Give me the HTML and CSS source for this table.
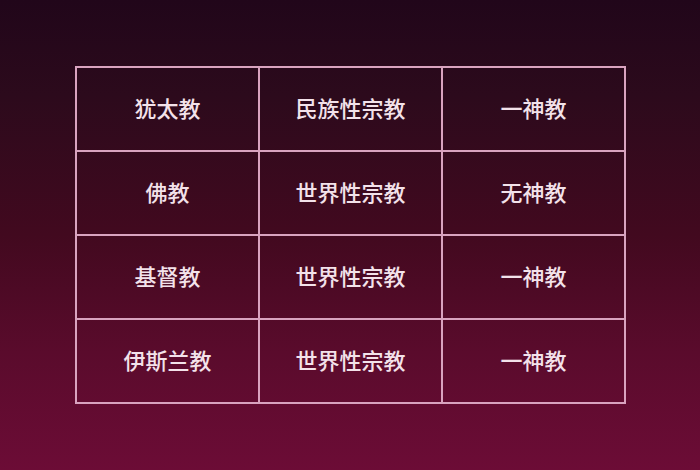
FILE: index.html
```html
<!DOCTYPE html>
<html lang="zh">
<head>
<meta charset="utf-8">
<link rel="stylesheet" href="styles.css">
</head>
<body>
<div class="page">
  <table class="grid">
    <tr><td>犹太教</td><td>民族性宗教</td><td>一神教</td></tr>
    <tr><td>佛教</td><td>世界性宗教</td><td>无神教</td></tr>
    <tr><td>基督教</td><td>世界性宗教</td><td>一神教</td></tr>
    <tr><td>伊斯兰教</td><td>世界性宗教</td><td>一神教</td></tr>
  </table>
</div>
</body>
</html>
```

FILE: styles.css
```css
html, body {
  margin: 0;
  padding: 0;
}
body {
  width: 700px;
  height: 470px;
  overflow: hidden;
  background: linear-gradient(180deg, #21061a 0%, #2c0a1c 20%, #42091f 50%, #5a0b2c 75%, #6c0c36 100%);
  font-family: "Noto Sans CJK SC", "Noto Sans", sans-serif;
}
.page {
  padding-top: 66px;
  padding-left: 75px;
}
.grid {
  border-collapse: collapse;
  border: 2px solid #d9a3bf;
}
.grid td {
  border: 2px solid #d9a3bf;
  width: 181px;
  height: 77px;
  padding: 0 0 5px;
  text-align: center;
  vertical-align: middle;
  color: #f3e2ea;
  font-size: 22px;
  font-weight: 500;
  line-height: 1;
}
```
